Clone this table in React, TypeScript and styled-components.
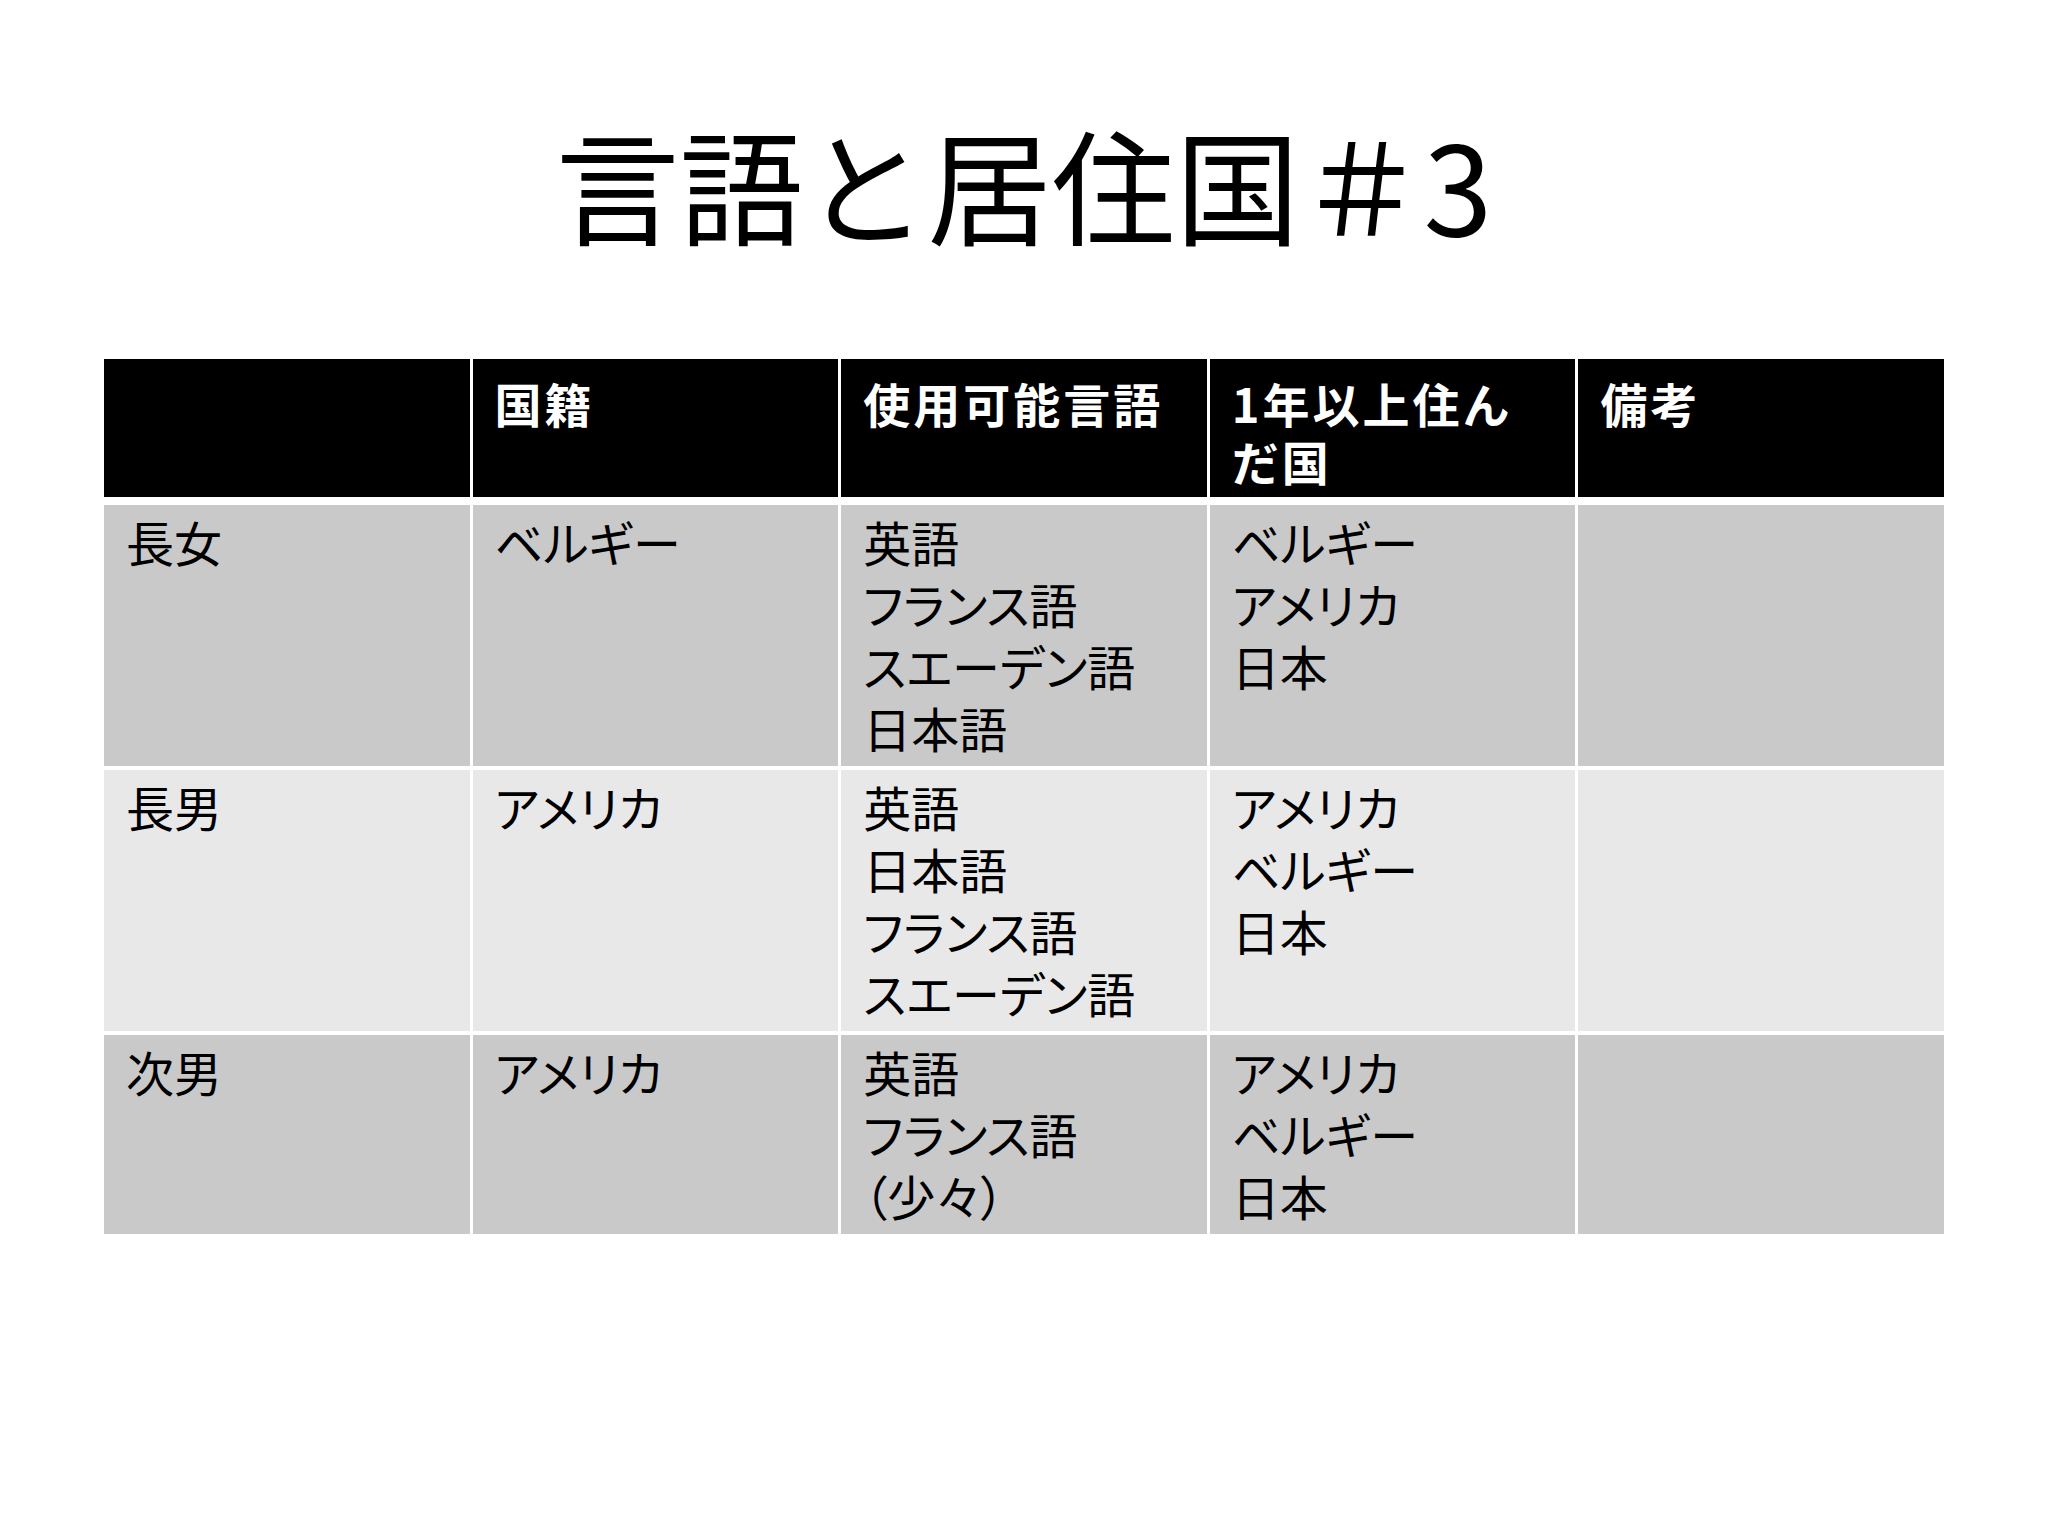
import styled, { createGlobalStyle } from 'styled-components';

const GlobalStyle = createGlobalStyle`
  html, body {
    margin: 0;
    padding: 0;
    background: #ffffff;
  }
  body {
    font-family: "Noto Sans CJK JP", "Noto Sans", sans-serif;
    color: #000000;
  }
`;

type RowData = {
  name: string;
  nationality: string;
  languages: string[];
  countries: string[];
  note: string;
};

const rows: RowData[] = [
  {
    name: '長女',
    nationality: 'ベルギー',
    languages: ['英語', 'フランス語', 'スエーデン語', '日本語'],
    countries: ['ベルギー', 'アメリカ', '日本'],
    note: '',
  },
  {
    name: '長男',
    nationality: 'アメリカ',
    languages: ['英語', '日本語', 'フランス語', 'スエーデン語'],
    countries: ['アメリカ', 'ベルギー', '日本'],
    note: '',
  },
  {
    name: '次男',
    nationality: 'アメリカ',
    languages: ['英語', 'フランス語', '（少々）'],
    countries: ['アメリカ', 'ベルギー', '日本'],
    note: '',
  },
];

const Lines = ({ items }: { items: string[] }) => (
  <>
    {items.map((text, i) => (
      <Line key={i}>{text}</Line>
    ))}
  </>
);

const App = () => {
  return (
    <>
      <GlobalStyle />
      <Slide>
        <Title>言語と居住国＃3</Title>
        <Table>
          <HeaderRow>
            <HeadCell />
            <HeadCell>国籍</HeadCell>
            <HeadCell>使用可能言語</HeadCell>
            <HeadCell>
              1年以上住ん
              <br />
              だ国
            </HeadCell>
            <HeadCell>備考</HeadCell>
          </HeaderRow>
          {rows.map((row, i) => (
            <BodyRow key={row.name}>
              <Cell $alt={i % 2 === 1}>{row.name}</Cell>
              <Cell $alt={i % 2 === 1}>{row.nationality}</Cell>
              <Cell $alt={i % 2 === 1}>
                <Lines items={row.languages} />
              </Cell>
              <Cell $alt={i % 2 === 1}>
                <Lines items={row.countries} />
              </Cell>
              <Cell $alt={i % 2 === 1}>{row.note}</Cell>
            </BodyRow>
          ))}
        </Table>
      </Slide>
    </>
  );
};

export default App;

const Slide = styled.div`
  width: 2048px;
  height: 1536px;
  box-sizing: border-box;
  padding: 108px 104px 0 104px;
  display: flex;
  flex-direction: column;
  align-items: stretch;
`;

const Title = styled.h1`
  margin: 0 0 102px 0;
  font-size: 124px;
  font-weight: 400;
  line-height: 149px;
  text-align: center;
  letter-spacing: 0;
`;

const Table = styled.div`
  display: flex;
  flex-direction: column;
  gap: 4px;
  background: #ffffff;
`;

const HeaderRow = styled.div`
  display: grid;
  grid-template-columns: repeat(5, 1fr);
  column-gap: 3px;
  margin-bottom: 4px;
`;

const BodyRow = styled.div`
  display: grid;
  grid-template-columns: repeat(5, 1fr);
  column-gap: 3px;
`;

const HeadCell = styled.div`
  background: #000000;
  color: #ffffff;
  font-weight: 700;
  font-size: 47px;
  line-height: 58px;
  letter-spacing: 3px;
  padding: 15px 18px 7px 22px;
  height: 138px;
  box-sizing: border-box;
`;

const Cell = styled.div<{ $alt: boolean }>`
  background: ${(p) => (p.$alt ? '#e8e8e8' : '#c9c9c9')};
  font-size: 48px;
  line-height: 62px;
  font-feature-settings: "palt";
  padding: 5px 18px 8px 22px;
  box-sizing: border-box;
`;

const Line = styled.div`
  white-space: nowrap;
`;
